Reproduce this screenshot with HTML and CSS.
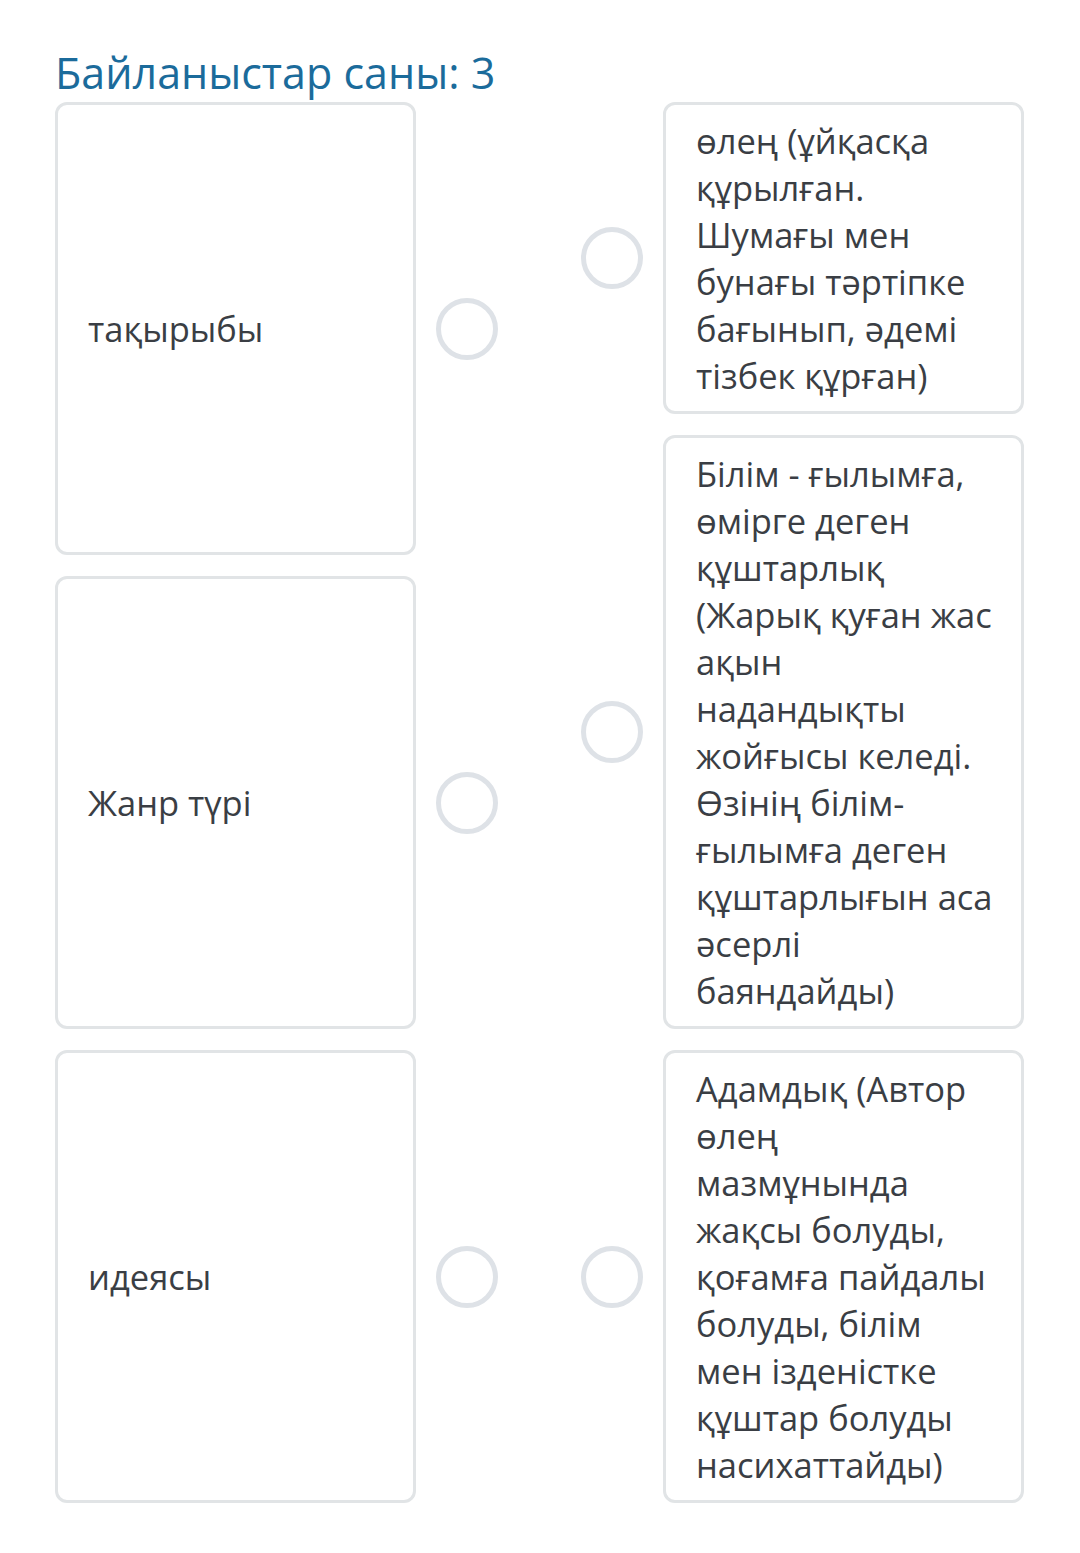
FILE: index.html
```html
<!DOCTYPE html>
<html lang="kk">
<head>
<meta charset="utf-8">
<link rel="stylesheet" href="styles.css">
</head>
<body>
<div class="page">
  <h1 class="title">Байланыстар саны: 3</h1>
  <div class="match">
    <div class="col col-left">
      <div class="item">
        <div class="card"><p>тақырыбы</p></div>
        <span class="dot"></span>
      </div>
      <div class="item">
        <div class="card"><p>Жанр түрі</p></div>
        <span class="dot"></span>
      </div>
      <div class="item">
        <div class="card"><p>идеясы</p></div>
        <span class="dot"></span>
      </div>
    </div>
    <div class="col col-right">
      <div class="item">
        <span class="dot"></span>
        <div class="card"><p>өлең (ұйқасқа құрылған. Шумағы мен бунағы тәртіпке бағынып, әдемі тізбек құрған)</p></div>
      </div>
      <div class="item">
        <span class="dot"></span>
        <div class="card"><p>Білім - ғылымға, өмірге деген құштарлық (Жарық қуған жас ақын надандықты жойғысы келеді. Өзінің білім-ғылымға деген құштарлығын аса әсерлі баяндайды)</p></div>
      </div>
      <div class="item">
        <span class="dot"></span>
        <div class="card"><p>Адамдық (Автор өлең мазмұнында жақсы болуды, қоғамға пайдалы болуды, білім мен ізденістке құштар болуды насихаттайды)</p></div>
      </div>
    </div>
  </div>
</div>
</body>
</html>
```

FILE: styles.css
```css
html, body {
  margin: 0;
  padding: 0;
  background: #ffffff;
}

body {
  font-family: "Open Sans", "Noto Sans", sans-serif;
  color: #3a3e44;
}

.page {
  padding: 45px 55px 0 55px;
}

.title {
  margin: 0 0 1px 0;
  font-size: 43px;
  font-weight: 400;
  line-height: 56px;
  color: #1b6b9b;
}

.match {
  display: flex;
  gap: 83px;
  align-items: stretch;
}

.col {
  display: flex;
  flex-direction: column;
  gap: 21px;
}

.col-left {
  width: 443px;
}

.col-left .item {
  flex: 1;
  align-items: stretch;
}

.col-left .dot {
  align-self: center;
}

.col-right {
  width: 444px;
}

.item {
  display: flex;
  align-items: center;
  gap: 20px;
}

.card {
  box-sizing: border-box;
  width: 361px;
  border: 3px solid #e1e4e6;
  border-radius: 12px;
  padding: 12px 27px 12px 30px;
  display: flex;
  align-items: center;
}

.card p {
  margin: 0;
  font-size: 34.5px;
  line-height: 47px;
}

.dot {
  flex: none;
  box-sizing: border-box;
  width: 62px;
  height: 62px;
  border: 5px solid #dee2e7;
  border-radius: 50%;
}
```
